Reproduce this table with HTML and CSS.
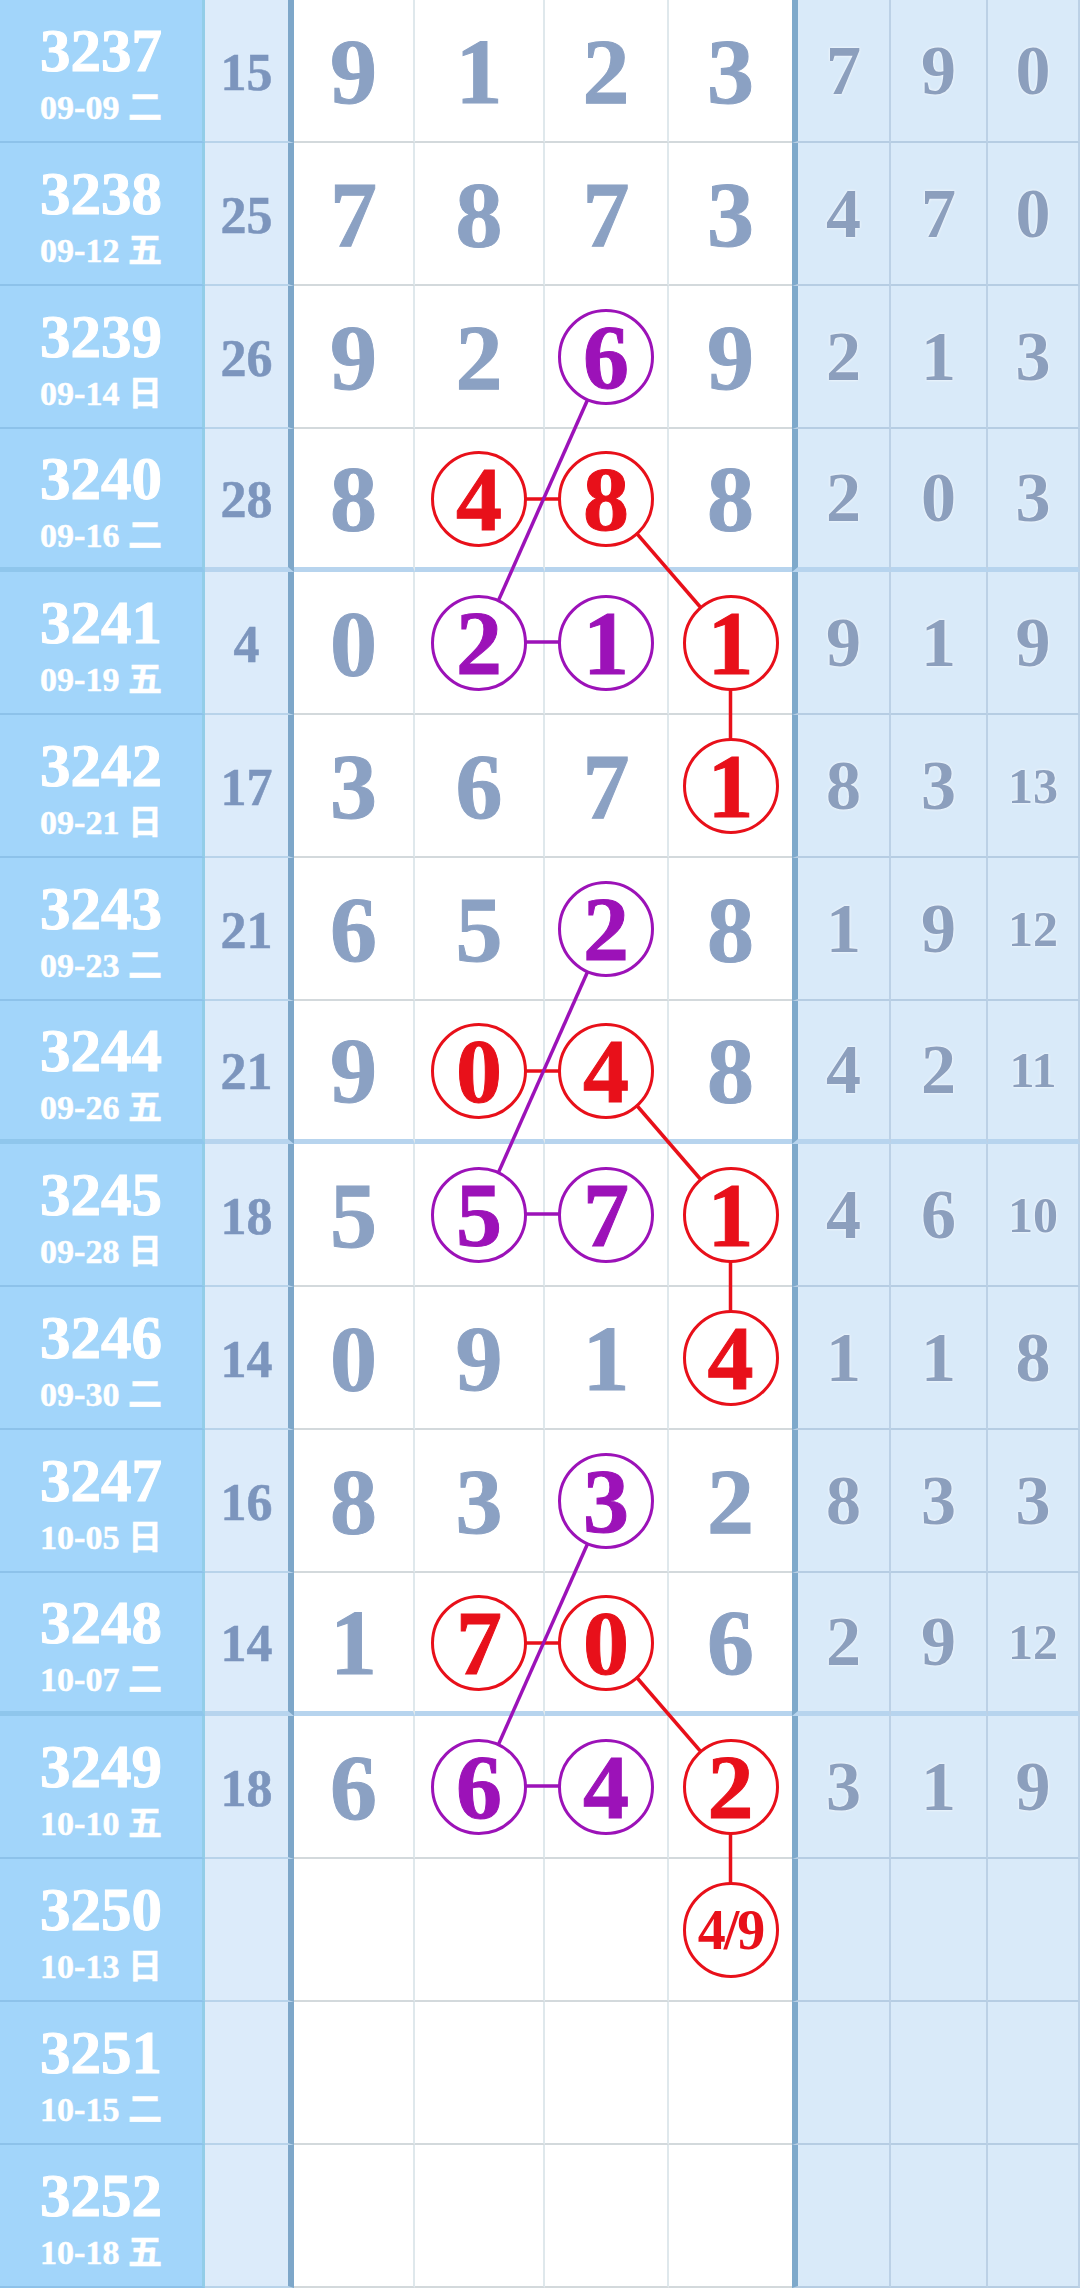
FILE: index.html
```html
<!DOCTYPE html>
<html lang="zh">
<head>
<meta charset="UTF-8">
<meta name="viewport" content="width=device-width, initial-scale=1.0">
<title>走势图</title>
<link rel="stylesheet" href="styles.css">
</head>
<body>

<div class="chart">
  <div class="row">
    <div class="issue"><span class="no">3237</span><span class="date">09-09 二</span></div>
    <div class="sum">15</div>
    <div class="cell">9</div><div class="cell">1</div><div class="cell">2</div><div class="cell">3</div>
    <div class="tail">7</div><div class="tail">9</div><div class="tail">0</div>
  </div>
  <div class="row">
    <div class="issue"><span class="no">3238</span><span class="date">09-12 五</span></div>
    <div class="sum">25</div>
    <div class="cell">7</div><div class="cell">8</div><div class="cell">7</div><div class="cell">3</div>
    <div class="tail">4</div><div class="tail">7</div><div class="tail">0</div>
  </div>
  <div class="row">
    <div class="issue"><span class="no">3239</span><span class="date">09-14 日</span></div>
    <div class="sum">26</div>
    <div class="cell">9</div><div class="cell">2</div><div class="cell"><span class="ball purple">6</span></div><div class="cell">9</div>
    <div class="tail">2</div><div class="tail">1</div><div class="tail">3</div>
  </div>
  <div class="row end">
    <div class="issue"><span class="no">3240</span><span class="date">09-16 二</span></div>
    <div class="sum">28</div>
    <div class="cell">8</div><div class="cell"><span class="ball red">4</span></div><div class="cell"><span class="ball red">8</span></div><div class="cell">8</div>
    <div class="tail">2</div><div class="tail">0</div><div class="tail">3</div>
  </div>
  <div class="row">
    <div class="issue"><span class="no">3241</span><span class="date">09-19 五</span></div>
    <div class="sum">4</div>
    <div class="cell">0</div><div class="cell"><span class="ball purple">2</span></div><div class="cell"><span class="ball purple">1</span></div><div class="cell"><span class="ball red">1</span></div>
    <div class="tail">9</div><div class="tail">1</div><div class="tail">9</div>
  </div>
  <div class="row">
    <div class="issue"><span class="no">3242</span><span class="date">09-21 日</span></div>
    <div class="sum">17</div>
    <div class="cell">3</div><div class="cell">6</div><div class="cell">7</div><div class="cell"><span class="ball red">1</span></div>
    <div class="tail">8</div><div class="tail">3</div><div class="tail small">13</div>
  </div>
  <div class="row">
    <div class="issue"><span class="no">3243</span><span class="date">09-23 二</span></div>
    <div class="sum">21</div>
    <div class="cell">6</div><div class="cell">5</div><div class="cell"><span class="ball purple">2</span></div><div class="cell">8</div>
    <div class="tail">1</div><div class="tail">9</div><div class="tail small">12</div>
  </div>
  <div class="row end">
    <div class="issue"><span class="no">3244</span><span class="date">09-26 五</span></div>
    <div class="sum">21</div>
    <div class="cell">9</div><div class="cell"><span class="ball red">0</span></div><div class="cell"><span class="ball red">4</span></div><div class="cell">8</div>
    <div class="tail">4</div><div class="tail">2</div><div class="tail small">11</div>
  </div>
  <div class="row">
    <div class="issue"><span class="no">3245</span><span class="date">09-28 日</span></div>
    <div class="sum">18</div>
    <div class="cell">5</div><div class="cell"><span class="ball purple">5</span></div><div class="cell"><span class="ball purple">7</span></div><div class="cell"><span class="ball red">1</span></div>
    <div class="tail">4</div><div class="tail">6</div><div class="tail small">10</div>
  </div>
  <div class="row">
    <div class="issue"><span class="no">3246</span><span class="date">09-30 二</span></div>
    <div class="sum">14</div>
    <div class="cell">0</div><div class="cell">9</div><div class="cell">1</div><div class="cell"><span class="ball red">4</span></div>
    <div class="tail">1</div><div class="tail">1</div><div class="tail">8</div>
  </div>
  <div class="row">
    <div class="issue"><span class="no">3247</span><span class="date">10-05 日</span></div>
    <div class="sum">16</div>
    <div class="cell">8</div><div class="cell">3</div><div class="cell"><span class="ball purple">3</span></div><div class="cell">2</div>
    <div class="tail">8</div><div class="tail">3</div><div class="tail">3</div>
  </div>
  <div class="row end">
    <div class="issue"><span class="no">3248</span><span class="date">10-07 二</span></div>
    <div class="sum">14</div>
    <div class="cell">1</div><div class="cell"><span class="ball red">7</span></div><div class="cell"><span class="ball red">0</span></div><div class="cell">6</div>
    <div class="tail">2</div><div class="tail">9</div><div class="tail small">12</div>
  </div>
  <div class="row">
    <div class="issue"><span class="no">3249</span><span class="date">10-10 五</span></div>
    <div class="sum">18</div>
    <div class="cell">6</div><div class="cell"><span class="ball purple">6</span></div><div class="cell"><span class="ball purple">4</span></div><div class="cell"><span class="ball red">2</span></div>
    <div class="tail">3</div><div class="tail">1</div><div class="tail">9</div>
  </div>
  <div class="row">
    <div class="issue"><span class="no">3250</span><span class="date">10-13 日</span></div>
    <div class="sum"></div>
    <div class="cell"></div><div class="cell"></div><div class="cell"></div><div class="cell"><span class="ball red guess">4/9</span></div>
    <div class="tail"></div><div class="tail"></div><div class="tail"></div>
  </div>
  <div class="row">
    <div class="issue"><span class="no">3251</span><span class="date">10-15 二</span></div>
    <div class="sum"></div>
    <div class="cell"></div><div class="cell"></div><div class="cell"></div><div class="cell"></div>
    <div class="tail"></div><div class="tail"></div><div class="tail"></div>
  </div>
  <div class="row">
    <div class="issue"><span class="no">3252</span><span class="date">10-18 五</span></div>
    <div class="sum"></div>
    <div class="cell"></div><div class="cell"></div><div class="cell"></div><div class="cell"></div>
    <div class="tail"></div><div class="tail"></div><div class="tail"></div>
  </div>

  <!-- connecting lines, drawn under the balls -->
  <svg class="links" width="1080" height="2289" viewBox="0 0 1080 2289">
    <g stroke-width="3.5" fill="none">
      <line x1="480" y1="499" x2="607" y2="499" stroke="#e8101a"/>
      <line x1="607" y1="499" x2="730.5" y2="642" stroke="#e8101a"/>
      <line x1="730.5" y1="642" x2="730.5" y2="785" stroke="#e8101a"/>
      <line x1="607" y1="356" x2="480" y2="642" stroke="#9c12b8"/>
      <line x1="480" y1="642" x2="607" y2="642" stroke="#9c12b8"/>

      <line x1="480" y1="1071" x2="607" y2="1071" stroke="#e8101a"/>
      <line x1="607" y1="1071" x2="730.5" y2="1214" stroke="#e8101a"/>
      <line x1="730.5" y1="1214" x2="730.5" y2="1357" stroke="#e8101a"/>
      <line x1="607" y1="928" x2="480" y2="1214" stroke="#9c12b8"/>
      <line x1="480" y1="1214" x2="607" y2="1214" stroke="#9c12b8"/>

      <line x1="480" y1="1643" x2="607" y2="1643" stroke="#e8101a"/>
      <line x1="607" y1="1643" x2="730.5" y2="1786" stroke="#e8101a"/>
      <line x1="730.5" y1="1786" x2="730.5" y2="1929" stroke="#e8101a"/>
      <line x1="607" y1="1500" x2="480" y2="1786" stroke="#9c12b8"/>
      <line x1="480" y1="1786" x2="607" y2="1786" stroke="#9c12b8"/>
    </g>
  </svg>
</div>

</body>
</html>
```
FILE: styles.css
```css
body {
  margin: 0;
  background-color: #ffffff;
  font-family: "Liberation Serif", "Noto Sans CJK SC", serif;
}
.chart {
  position: relative;
  width: 1080px;
  overflow: hidden;
}
.row {
  display: grid;
  grid-template-columns: 205px 89px 121px 130px 124px 123px 99px 97px 92px;
  height: 143px;
}
.row > div {
  box-sizing: border-box;
  display: flex;
  align-items: center;
  justify-content: center;
  font-weight: bold;
  line-height: 1;
  border-bottom: 2px solid #d3d9dc;
}

.issue {
  flex-direction: column;
  padding-top: 12px;
  background-color: #a2d5fa;
  color: #ffffff;
  border-right: 3px solid #93cde8;
  border-bottom-color: #8dc2ea !important;
}
.issue .no {
  font-size: 61px;
  line-height: 52px;
  -webkit-text-stroke: 1px #ffffff;
}
.issue .date {
  font-size: 34px;
  line-height: 40px;
  margin-top: 11px;
  white-space: pre;
  -webkit-text-stroke: 0.5px #ffffff;
}

.sum {
  padding-top: 4px;
  background-color: #dcebfa;
  color: #7c95bd;
  font-size: 52px;
  -webkit-text-stroke: 0.5px #7c95bd;
  border-right: 6px solid #7ea7c9;
  border-bottom-color: #b8d3ea !important;
}

.cell {
  background-color: #ffffff;
  color: #8ba1c3;
  font-size: 94px;
  -webkit-text-stroke: 1px #8ba1c3;
  border-right: 2px solid #dfe8ec;
}
.cell:nth-child(6) {
  border-right: none;
}

.tail {
  background-color: #d9eaf9;
  color: #8c9fbd;
  font-size: 70px;
  text-shadow: 0 0 3px #ffffff;
  border-right: 2px solid #bcd1e6;
  border-bottom-color: #b6cde3 !important;
}
.tail:nth-child(7) {
  border-left: 6px solid #7ea9cb;
}
.tail.small {
  font-size: 50px;
}

.row.end > div {
  border-bottom-width: 5px;
  border-bottom-color: #b7d4ee !important;
}
.row.end > .issue {
  border-bottom-color: #8fc6ec !important;
}

.ball {
  position: relative;
  z-index: 2;
  box-sizing: border-box;
  display: flex;
  align-items: center;
  justify-content: center;
  width: 96px;
  height: 96px;
  margin-top: 1px;
  border: 3.5px solid;
  border-radius: 50%;
  background-color: #ffffff;
  font-size: 92px;
}
.ball.red {
  color: #e8101a;
  border-color: #e8101a;
  -webkit-text-stroke: 1px #e8101a;
}
.ball.purple {
  color: #9c12b8;
  border-color: #9c12b8;
  -webkit-text-stroke: 1px #9c12b8;
}
.ball.guess {
  font-size: 56px;
  letter-spacing: -2px;
  -webkit-text-stroke: 0;
}

.links {
  position: absolute;
  top: 0;
  left: 0;
  z-index: 1;
  pointer-events: none;
}
```
